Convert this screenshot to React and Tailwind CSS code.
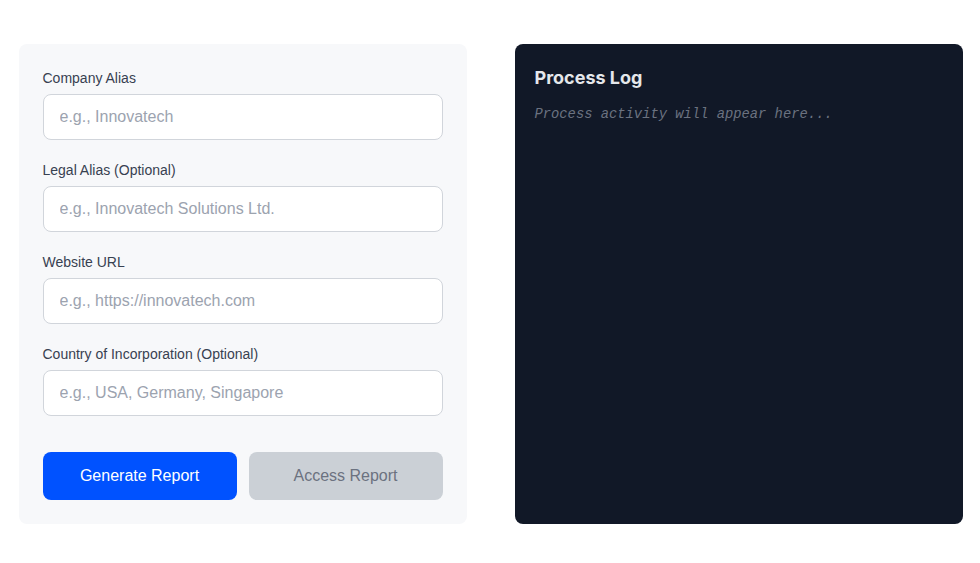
const fields = [
  { label: "Company Alias", placeholder: "e.g., Innovatech" },
  { label: "Legal Alias (Optional)", placeholder: "e.g., Innovatech Solutions Ltd." },
  { label: "Website URL", placeholder: "e.g., https://innovatech.com" },
  { label: "Country of Incorporation (Optional)", placeholder: "e.g., USA, Germany, Singapore" },
];

export default function App() {
  return (
    <div className="min-h-screen bg-white pt-[44px] font-['Liberation_Sans',Arial,sans-serif]">
      <div className="flex justify-center gap-12 pl-px">
        <div className="w-[448px] h-[480px] rounded-lg bg-[#f7f8fa] p-6">
          <div className="flex flex-col gap-5">
            {fields.map((f) => (
              <div key={f.label}>
                <label className="block text-sm leading-5 text-[#374151] mb-1.5">{f.label}</label>
                <input
                  type="text"
                  placeholder={f.placeholder}
                  className="w-full h-[46px] rounded-lg border border-[#d1d5db] bg-white px-4 text-base text-gray-900 placeholder:text-[#9ca3af] outline-none"
                />
              </div>
            ))}
          </div>
          <div className="mt-9 grid grid-cols-2 gap-3">
            <button className="h-12 rounded-lg bg-[#0052ff] text-base text-white">Generate Report</button>
            <button className="h-12 rounded-lg bg-[#cbd0d6] text-base text-[#6b7280]">Access Report</button>
          </div>
        </div>
        <div className="w-[448px] h-[480px] rounded-lg bg-[#111827] p-5">
          <h2 className="text-lg leading-7 font-bold text-[#e5e7eb] font-['Inter',sans-serif]">Process Log</h2>
          <p className="mt-[13px] text-[13.8px] leading-5 italic text-[#6b7280] font-['Liberation_Mono',monospace]">
            Process activity will appear here...
          </p>
        </div>
      </div>
    </div>
  );
}
